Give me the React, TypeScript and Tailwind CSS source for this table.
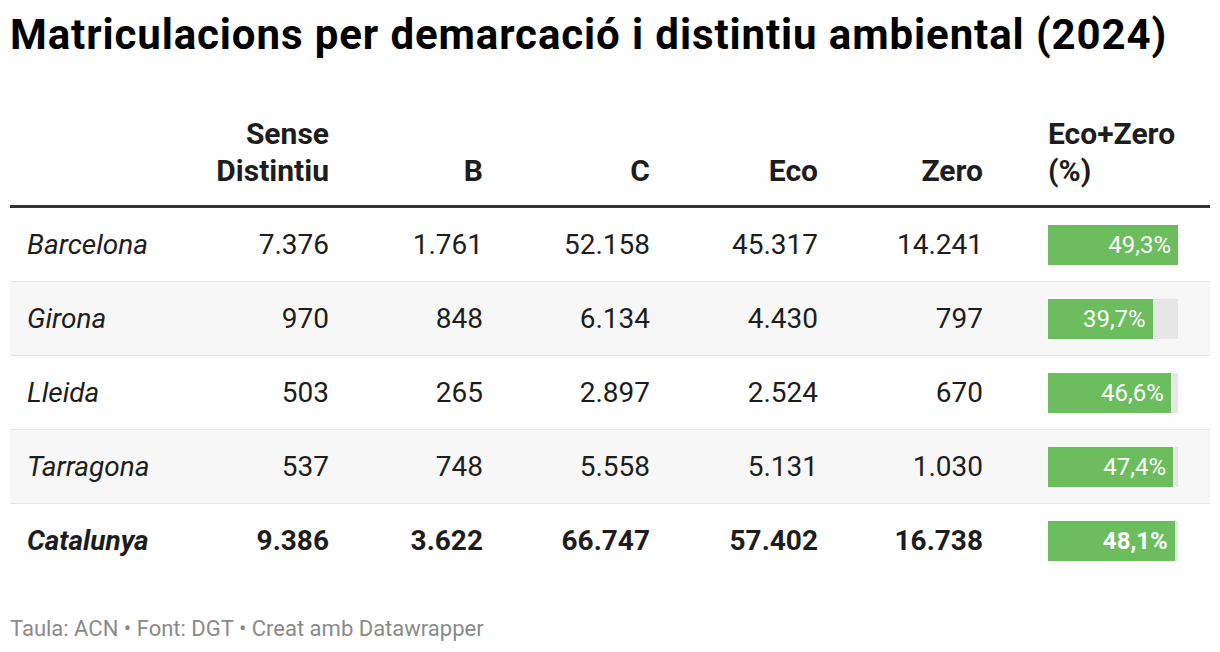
const ROWS = [
  { name: "Barcelona", vals: ["7.376", "1.761", "52.158", "45.317", "14.241"], pct: 49.3, label: "49,3%" },
  { name: "Girona", vals: ["970", "848", "6.134", "4.430", "797"], pct: 39.7, label: "39,7%" },
  { name: "Lleida", vals: ["503", "265", "2.897", "2.524", "670"], pct: 46.6, label: "46,6%" },
  { name: "Tarragona", vals: ["537", "748", "5.558", "5.131", "1.030"], pct: 47.4, label: "47,4%" },
  { name: "Catalunya", vals: ["9.386", "3.622", "66.747", "57.402", "16.738"], pct: 48.1, label: "48,1%", total: true },
];

const COLS = ["w-[129px]", "w-[154px]", "w-[167px]", "w-[168px]", "w-[165px]"];
const MAX = 49.3;

export default function App() {
  return (
    <div className="w-[1220px] h-[652px] bg-white text-[#1d1d1d] font-['Roboto',sans-serif] px-[10px] overflow-hidden">
      <h1 className="pt-[7px] text-[42px] leading-[56px] font-bold text-black tracking-[0.9px] whitespace-nowrap">
        Matriculacions per demarcació i distintiu ambiental (2024)
      </h1>

      <div className="mt-[37px] w-[1200px]">
        <div className="flex items-end h-[108px] pb-[16px] text-[30px] leading-[37px] font-bold border-b-[3px] border-[#333]">
          <div className="w-[190px]" />
          <div className={`${COLS[0]} text-right`}>Sense<br />Distintiu</div>
          <div className={`${COLS[1]} text-right`}>B</div>
          <div className={`${COLS[2]} text-right`}>C</div>
          <div className={`${COLS[3]} text-right`}>Eco</div>
          <div className={`${COLS[4]} text-right`}>Zero</div>
          <div className="pl-[65px] whitespace-nowrap">Eco+Zero<br />(%)</div>
        </div>

        {ROWS.map((r, i) => (
          <div
            key={r.name}
            className={`flex items-center h-[74px] text-[28px] ${i % 2 === 1 ? "bg-[#f7f7f7]" : "bg-white"} ${r.total ? "font-bold" : "border-b border-[#e5e5e5]"}`}
          >
            <div className="w-[190px] pl-[17px] italic">{r.name}</div>
            {r.vals.map((v, j) => (
              <div key={j} className={`${COLS[j]} text-right`}>{v}</div>
            ))}
            <div className="pl-[65px]">
              <div className="w-[130px] h-[40px] bg-[#e6e6e6]">
                <div
                  className="h-full bg-[#6cbd5d] text-white text-[24px] leading-[40px] text-right pr-[7px] whitespace-nowrap"
                  style={{ width: `${(r.pct / MAX) * 130}px` }}
                >
                  {r.label}
                </div>
              </div>
            </div>
          </div>
        ))}
      </div>

      <div className="mt-[38px] text-[22px] leading-[26px] text-[#8a8a8a]">
        Taula: ACN • Font: DGT • Creat amb Datawrapper
      </div>
    </div>
  );
}
